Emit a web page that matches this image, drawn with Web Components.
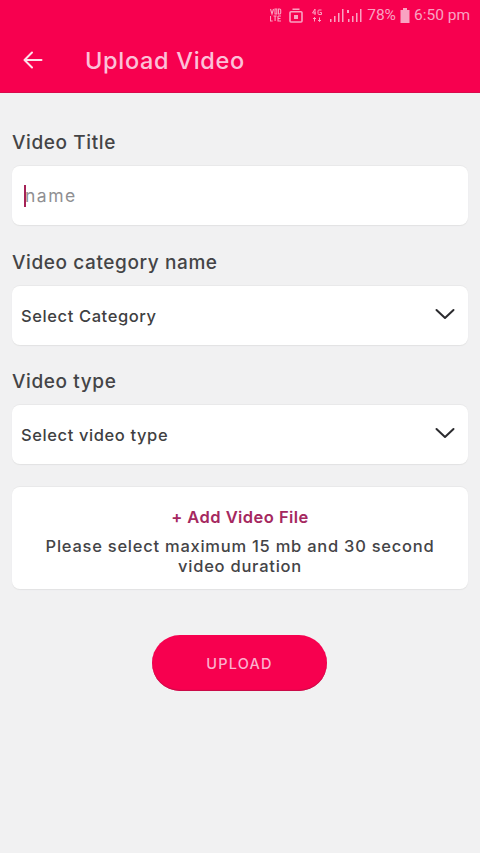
<!DOCTYPE html>
<html>
<head>
<meta charset="utf-8">
<style>
  html, body { margin: 0; height: 100%; background: #f1f1f2; }
  body { font-family: Inter, "Liberation Sans", sans-serif; }
</style>
</head>
<body>
<app-bar title="Upload Video"></app-bar>
<main-form>
  <form-label style="height:73px">Video Title</form-label>
  <text-field placeholder="name"></text-field>
  <form-label style="height:61px">Video category name</form-label>
  <select-field>Select Category</select-field>
  <form-label style="height:60px">Video type</form-label>
  <select-field>Select video type</select-field>
  <file-card></file-card>
  <upload-button>UPLOAD</upload-button>
</main-form>

<script>
class AppBar extends HTMLElement {
  connectedCallback() {
    this.attachShadow({ mode: 'open' }).innerHTML = `
      <style>
        :host {
          display: block;
          height: 93px;
          background: #f7004f;
          box-shadow: inset 0 -1px 0 #d80a4c;
        }
        .status {
          height: 30px;
          display: flex;
          align-items: center;
          justify-content: flex-end;
          padding-right: 10px;
          font: 15.5px Roboto, sans-serif;
          color: #f9a3c2;
        }
        .status svg { display: block; }
        .nav {
          height: 63px;
          display: flex;
          align-items: center;
          padding-bottom: 3px;
          box-sizing: border-box;
        }
        .back { margin-left: 23px; width: 20px; height: 20px; }
        h1 {
          margin: 0 0 0 42px;
          font: 500 23.5px Inter, sans-serif;
          letter-spacing: .7px;
          color: #fcc0d8;
        }
      </style>
      <div class="status">
        <svg width="12" height="14" viewBox="0 0 12 14" fill="none" stroke="#f9a3c2" stroke-width="1.1">
          <path d="M.5 1L2 6l1.5-5M5 1h1.8v5H5zM8.5 1v5h1.2a1 1 0 0 0 1-1V2a1 1 0 0 0-1-1zM.5 8v5h2.2M3.5 8h3.2M5.1 8v5M8 8v5h3M8 8h3M8 10.5h2.5"/>
        </svg>
        <svg width="14" height="15" viewBox="0 0 14 15" fill="none" stroke="#f9a3c2" stroke-width="1.6" style="margin-left:7px">
          <path d="M3.5 1.2h7M2 3.8h10a1 1 0 0 1 1 1V13a1 1 0 0 1-1 1H2a1 1 0 0 1-1-1V4.800a1 1 0 0 1 1-1z"/>
          <rect x="5" y="7" width="4" height="4" fill="#f9a3c2" stroke="none"/>
        </svg>
        <svg width="10" height="14" viewBox="0 0 10 14" fill="none" stroke="#f9a3c2" stroke-width="1" style="margin-left:9px">
          <path d="M3 1L.5 5h3.5M3 1v6M9.500 2H7a1 1 0 0 0-1 1v2.500a1 1 0 0 0 1 1h2.500V4.500H7.800M2.500 9.500v4M1 11l1.500-1.500L4 11M7.500 9.500v4M6 12l1.500 1.500L9 12"/>
        </svg>
        <svg width="14" height="15" viewBox="0 0 14 15" fill="#f9a3c2" style="margin-left:8px">
          <rect x="0" y="11" width="1.5" height="3"/><rect x="4" y="8" width="1.5" height="6"/><rect x="8" y="5" width="1.5" height="9"/><rect x="12" y="1" width="1.5" height="13"/>
        </svg>
        <svg width="15" height="15" viewBox="0 0 15 15" fill="#f9a3c2" style="margin-left:3px">
          <rect x="0" y="2" width="2" height="3"/><rect x="1" y="11" width="1.500" height="3"/><rect x="5" y="8" width="1.500" height="6"/><rect x="9" y="5" width="1.500" height="9"/><rect x="13" y="1" width="1.500" height="13"/>
        </svg>
        <span style="margin-left:5px">78%</span>
        <svg width="10" height="15" viewBox="0 0 10 15" fill="#f9a3c2" style="margin-left:4px"><path d="M3 0h4v2h2.500v13H.5V2H3z"/></svg>
        <span style="margin-left:4px">6:50 pm</span>
      </div>
      <div class="nav">
        <svg class="back" viewBox="0 0 20 20" fill="none" stroke="#fde0ea" stroke-width="2" stroke-linecap="round" stroke-linejoin="round">
          <path d="M18.500 10H1.500M9 2.500L1.500 10 9 17.500"/>
        </svg>
        <h1>${this.getAttribute('title')}</h1>
      </div>`
  }
}
customElements.define('app-bar', AppBar)

class MainForm extends HTMLElement {
  constructor() {
    super()
    this.attachShadow({ mode: 'open' }).innerHTML = `
      <style>
        :host { display: flex; flex-direction: column; padding: 0 12px; }
      </style>
      <slot></slot>`
  }
}
customElements.define('main-form', MainForm)

class FormLabel extends HTMLElement {
  constructor() {
    super()
    this.attachShadow({ mode: 'open' }).innerHTML = `
      <style>
        :host {
          display: flex;
          align-items: flex-end;
          box-sizing: border-box;
          padding-bottom: 12px;
          font: 500 19px Inter, sans-serif;
          letter-spacing: .6px;
          color: #444446;
        }
      </style>
      <slot></slot>`
  }
}
customElements.define('form-label', FormLabel)

const fieldCss = `
  :host {
    display: flex;
    align-items: center;
    height: 59px;
    box-sizing: border-box;
    background: #fff;
    border-radius: 8px;
    box-shadow: 0 -1px 0 #e9e9ea, 0 1px 1px #e2e2e3;
  }
`

class TextField extends HTMLElement {
  connectedCallback() {
    this.attachShadow({ mode: 'open' }).innerHTML = `
      <style>
        ${fieldCss}
        :host {
          padding-left: 12px;
          font: 400 17.5px Inter, sans-serif;
          letter-spacing: 1.5px;
          color: #8f8f92;
        }
        .caret { width: 2px; height: 22px; background: #a52257; margin-right: -1px; position: relative; }
      </style>
      <span class="caret"></span><span>${this.getAttribute('placeholder')}</span>`
  }
}
customElements.define('text-field', TextField)

class SelectField extends HTMLElement {
  constructor() {
    super()
    this.attachShadow({ mode: 'open' }).innerHTML = `
      <style>
        ${fieldCss}
        :host {
          justify-content: space-between;
          padding: 0 13px 0 9px;
          font: 500 16.5px Inter, sans-serif;
          letter-spacing: .6px;
          color: #3f3f42;
        }
        svg { width: 20px; height: 12px; margin-bottom: 3px; }
      </style>
      <span><slot></slot></span>
      <svg viewBox="0 0 20 12" fill="none" stroke="#2b2b2e" stroke-width="2" stroke-linecap="round" stroke-linejoin="round">
        <path d="M1.500 2L10 10l8.500-8"/>
      </svg>`
  }
}
customElements.define('select-field', SelectField)

class FileCard extends HTMLElement {
  constructor() {
    super()
    this.attachShadow({ mode: 'open' }).innerHTML = `
      <style>
        ${fieldCss}
        :host {
          display: block;
          height: 102px;
          margin-top: 23px;
          padding: 20px 20px 0;
          text-align: center;
        }
        .add { font: 600 16.5px/20px Inter, sans-serif; letter-spacing: .45px; color: #a5285f; margin-bottom: 9px; }
        .note { font: 500 16.5px/20px Inter, sans-serif; letter-spacing: .75px; color: #444447; }
      </style>
      <div class="add">+ Add Video File</div>
      <div class="note">Please select maximum 15 mb and 30 second video duration</div>`
  }
}
customElements.define('file-card', FileCard)

class UploadButton extends HTMLElement {
  constructor() {
    super()
    this.attachShadow({ mode: 'open' }).innerHTML = `
      <style>
        :host {
          display: flex;
          align-items: center;
          justify-content: center;
          align-self: center;
          width: 175px;
          height: 56px;
          margin: 46px 1px 0 0;
          border-radius: 28px;
          background: #f7004f;
          box-shadow: inset 0 -1px 1px #c50c47;
          color: #fbb0cd;
          font: 500 14.5px Inter, sans-serif;
          letter-spacing: 1.2px;
        }
      </style>
      <slot></slot>`
  }
}
customElements.define('upload-button', UploadButton)
</script>
</body>
</html>
